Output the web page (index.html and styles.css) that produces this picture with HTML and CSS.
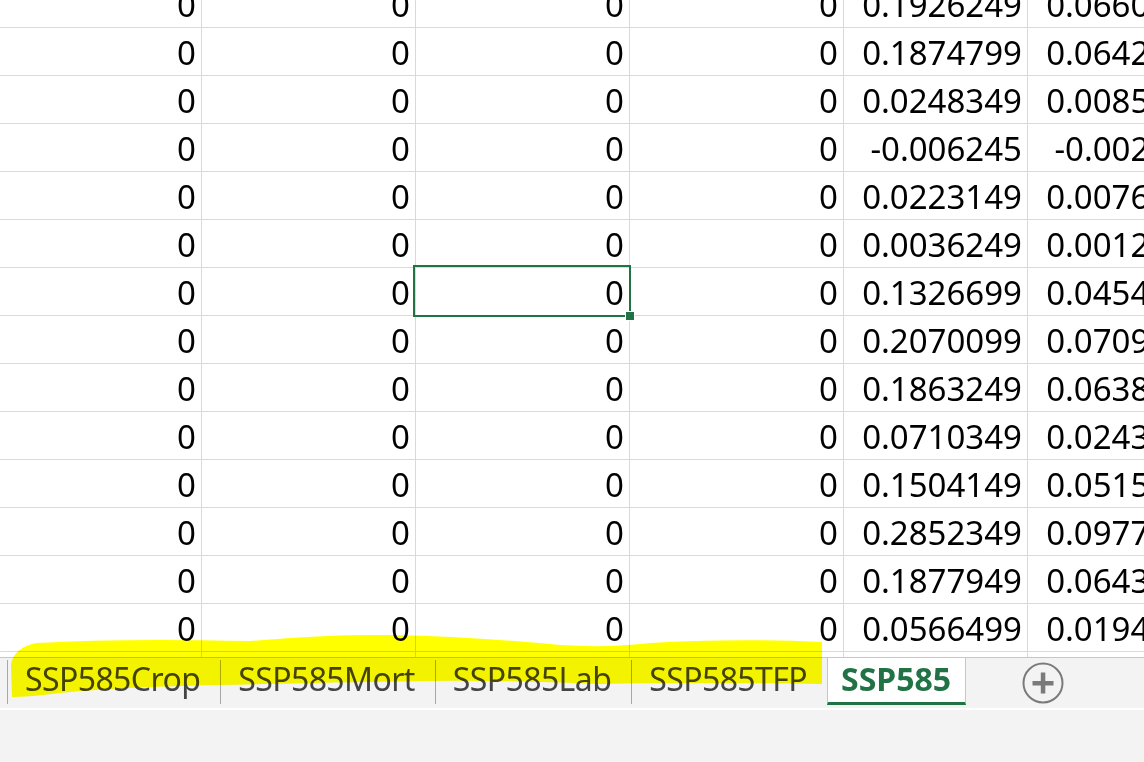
FILE: index.html
```html
<!DOCTYPE html>
<html lang="en">
<head>
<meta charset="utf-8">
<title>SSP585</title>
<link rel="stylesheet" href="styles.css">
</head>
<body>
<div class="sheet">
  <div class="grid">
    <div class="c">0</div><div class="c">0</div><div class="c">0</div><div class="c">0</div><div class="c">0.1926249</div><div class="c">0.0660125</div>
    <div class="c">0</div><div class="c">0</div><div class="c">0</div><div class="c">0</div><div class="c">0.1874799</div><div class="c">0.0642498</div>
    <div class="c">0</div><div class="c">0</div><div class="c">0</div><div class="c">0</div><div class="c">0.0248349</div><div class="c">0.0085109</div>
    <div class="c">0</div><div class="c">0</div><div class="c">0</div><div class="c">0</div><div class="c">-0.006245</div><div class="c">-0.002141</div>
    <div class="c">0</div><div class="c">0</div><div class="c">0</div><div class="c">0</div><div class="c">0.0223149</div><div class="c">0.0076473</div>
    <div class="c">0</div><div class="c">0</div><div class="c">0</div><div class="c">0</div><div class="c">0.0036249</div><div class="c">0.0012423</div>
    <div class="c">0</div><div class="c">0</div><div class="c selected">0<span class="sel"><span class="handle"></span></span></div><div class="c">0</div><div class="c">0.1326699</div><div class="c">0.0454664</div>
    <div class="c">0</div><div class="c">0</div><div class="c">0</div><div class="c">0</div><div class="c">0.2070099</div><div class="c">0.0709423</div>
    <div class="c">0</div><div class="c">0</div><div class="c">0</div><div class="c">0</div><div class="c">0.1863249</div><div class="c">0.0638535</div>
    <div class="c">0</div><div class="c">0</div><div class="c">0</div><div class="c">0</div><div class="c">0.0710349</div><div class="c">0.0243437</div>
    <div class="c">0</div><div class="c">0</div><div class="c">0</div><div class="c">0</div><div class="c">0.1504149</div><div class="c">0.0515472</div>
    <div class="c">0</div><div class="c">0</div><div class="c">0</div><div class="c">0</div><div class="c">0.2852349</div><div class="c">0.0977499</div>
    <div class="c">0</div><div class="c">0</div><div class="c">0</div><div class="c">0</div><div class="c">0.1877949</div><div class="c">0.0643573</div>
    <div class="c">0</div><div class="c">0</div><div class="c">0</div><div class="c">0</div><div class="c">0.0566499</div><div class="c">0.0194139</div>
    <div class="c">0</div><div class="c">0</div><div class="c">0</div><div class="c">0</div><div class="c">0.1411249</div><div class="c">0.0483634</div>
  </div>
</div>
<div class="tabbar">
  <div class="tab">SSP585Crop</div>
  <div class="tab">SSP585Mort</div>
  <div class="tab">SSP585Lab</div>
  <div class="tab">SSP585TFP</div>
  <div class="tab active">SSP585</div>
  <svg class="add" width="42" height="42" viewBox="0 0 42 42" aria-label="New sheet">
    <circle cx="21" cy="21" r="19.5" fill="none" stroke="#7a7a7a" stroke-width="2"/>
    <rect x="10.5" y="19" width="21" height="4.5" fill="#7a7a7a"/>
    <rect x="18.8" y="10.5" width="4.5" height="21" fill="#7a7a7a"/>
  </svg>
</div>
<div class="status"></div>
<svg class="highlight" width="1144" height="762" viewBox="0 0 1144 762">
  <path d="M12,697 L11,665 Q13,648 36,643 Q120,638 250,641 Q330,634 390,635 Q480,637 560,645 Q610,648 650,643 Q730,638 822,642 L822,684 Q700,682 600,684 Q500,680 430,681 Q300,683 220,685 Q120,687 60,693 Q30,697 12,697 Z" fill="#ffff00"/>
</svg>
</body>
</html>
```
FILE: styles.css
```css
html, body {
  margin: 0;
  padding: 0;
}
body {
  width: 1144px;
  height: 762px;
  overflow: hidden;
  position: relative;
  background: #f3f3f3;
  font-family: "Noto Sans", "Open Sans", sans-serif;
}
.sheet {
  height: 657px;
  overflow: hidden;
  background: #ffffff;
}
.grid {
  margin-top: -20px;
  display: grid;
  grid-template-columns: 202px 214px 214px 214px 184px 184px;
  grid-auto-rows: 48px;
  width: 1212px;
}
.c {
  position: relative;
  box-sizing: border-box;
  border-right: 1px solid #d9d9d9;
  border-bottom: 1px solid #d9d9d9;
  display: flex;
  align-items: flex-end;
  justify-content: flex-end;
  padding: 0 5px 6px 0;
  font-size: 33px;
  line-height: 33px;
  color: #000;
  white-space: nowrap;
  overflow: hidden;
}
.c.selected {
  overflow: visible;
  z-index: 1;
}
.sel {
  position: absolute;
  top: -3px;
  left: -3px;
  right: -2px;
  bottom: -2px;
  border: 2px solid #217346;
}
.handle {
  position: absolute;
  right: -6px;
  bottom: -6px;
  width: 8px;
  height: 8px;
  background: #217346;
  border: 1px solid #ffffff;
}
.tabbar {
  box-sizing: border-box;
  height: 51px;
  border-top: 1px solid #c6c6c6;
  background: #f3f3f3;
  display: flex;
  align-items: flex-start;
  padding-left: 7px;
}
.tab {
  margin-top: 2px;
  height: 44px;
  border-left: 1px solid #a8a8a8;
  padding: 0 20px 0 17px;
  font-size: 32px;
  line-height: 38px;
  letter-spacing: -0.6px;
  color: #444444;
  white-space: nowrap;
}
.tab.active {
  margin-top: 0;
  height: 44px;
  line-height: 41px;
  padding: 0 14px 0 13px;
  background: #ffffff;
  border-left: 1px solid #c6c6c6;
  border-right: 1px solid #c6c6c6;
  border-bottom: 3px solid #217346;
  color: #217346;
  font-weight: bold;
  letter-spacing: 0;
}
.add {
  align-self: center;
  margin-left: 56px;
}
.status {
  height: 54px;
  border-top: 2px solid #ffffff;
  background: #f3f3f3;
}
.highlight {
  position: absolute;
  left: 0;
  top: 0;
  pointer-events: none;
  mix-blend-mode: multiply;
}
```
